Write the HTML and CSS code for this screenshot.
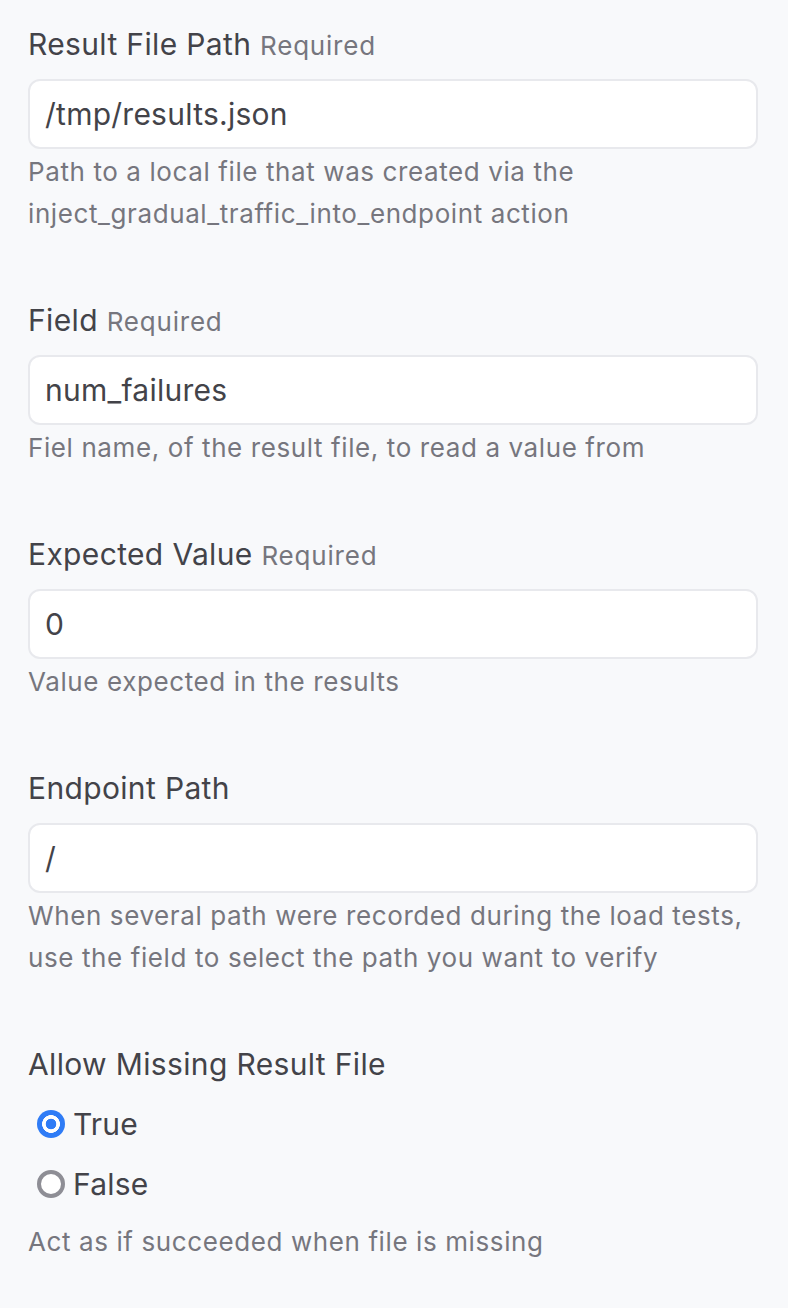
FILE: index.html
```html
<!DOCTYPE html>
<html>
<head>
<meta charset="utf-8">
<link rel="stylesheet" href="styles.css">
</head>
<body>
<form class="form">
  <div class="field">
    <label class="label">Result File Path <span class="req">Required</span></label>
    <div class="input">/tmp/results.json</div>
    <p class="help">Path to a local file that was created via the inject_gradual_traffic_into_endpoint action</p>
  </div>
  <div class="field">
    <label class="label">Field <span class="req">Required</span></label>
    <div class="input">num_failures</div>
    <p class="help">Fiel name, of the result file, to read a value from</p>
  </div>
  <div class="field">
    <label class="label">Expected Value <span class="req">Required</span></label>
    <div class="input">0</div>
    <p class="help">Value expected in the results</p>
  </div>
  <div class="field">
    <label class="label">Endpoint Path</label>
    <div class="input">/</div>
    <p class="help">When several path were recorded during the load tests, use the field to select the path you want to verify</p>
  </div>
  <div class="field">
    <label class="label">Allow Missing Result File</label>
    <div class="radios">
      <div class="radio"><span class="dot checked"></span><span class="rlabel">True</span></div>
      <div class="radio"><span class="dot"></span><span class="rlabel">False</span></div>
    </div>
    <p class="help help-radio">Act as if succeeded when file is missing</p>
  </div>
</form>
</body>
</html>
```
FILE: styles.css
```css
html, body {
  margin: 0;
  padding: 0;
  background: #f8f9fb;
}
body {
  font-family: Inter, "Noto Sans", sans-serif;
  color: #434349;
}
.form {
  display: flex;
  flex-direction: column;
  gap: 64px;
  padding: 23px 30px 0 28px;
}
.field {
  display: flex;
  flex-direction: column;
}
.label {
  display: block;
  height: 42px;
  font-size: 30px;
  line-height: 42px;
  letter-spacing: 0.35px;
  color: #434349;
  margin-bottom: 14px;
  white-space: nowrap;
}
.req {
  font-size: 26px;
  line-height: 1;
  letter-spacing: 0.8px;
  color: #76767e;
}
.input {
  box-sizing: border-box;
  height: 70px;
  border: 2px solid #e8e9ed;
  border-radius: 12px;
  background: #ffffff;
  padding: 0 15px;
  font-size: 30px;
  line-height: 66px;
  letter-spacing: 0.25px;
  color: #434349;
}
.help {
  margin: 2px 0 0;
  font-size: 26px;
  line-height: 42px;
  letter-spacing: 0.6px;
  color: #76767e;
}
.help-radio {
  margin-top: 16px;
}
.radios {
  display: flex;
  flex-direction: column;
  gap: 18px;
  padding-left: 9px;
  margin-top: 4px;
}
.radio {
  display: flex;
  align-items: center;
  gap: 8px;
  height: 42px;
}
.dot {
  flex: none;
  width: 28px;
  height: 28px;
  box-sizing: border-box;
  border-radius: 50%;
  border: 4px solid #8e8e95;
  background: #fff;
}
.dot.checked {
  border: none;
  background: radial-gradient(circle at center, #2f7cf6 0 5px, #ffffff 5.6px 8.6px, #2f7cf6 9.2px);
}
.rlabel {
  font-size: 30px;
  letter-spacing: 0.2px;
  color: #434349;
}
```
